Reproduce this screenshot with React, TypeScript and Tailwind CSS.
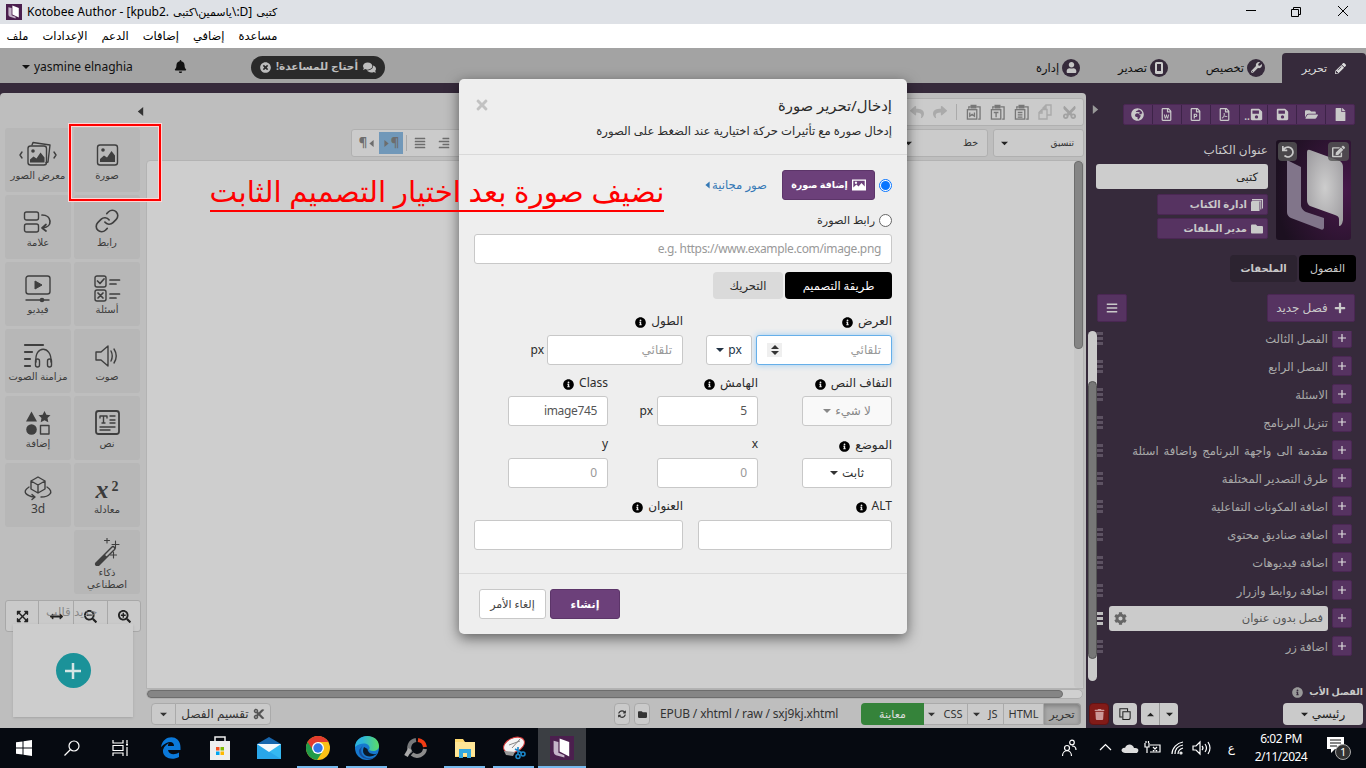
import React from "react";
import {
  FaPencilAlt, FaWrench, FaUser, FaBell, FaComments, FaTimesCircle, FaFile, FaFolderOpen, FaSave,
  FaGlobeAfrica, FaUndo, FaEdit, FaFolder, FaPlus, FaBars, FaInfoCircle, FaTrash, FaCog, FaCut, FaReply, FaShare,
  FaAlignJustify, FaAlignRight, FaSearchPlus, FaSearchMinus, FaExpandArrowsAlt, FaArrowsAltH, FaSyncAlt,
  FaTimes, FaRegFileWord, FaRegFilePdf, FaRegFilePowerpoint,
} from "react-icons/fa";
import { Link } from "lucide-react";

type Kids = { children?: React.ReactNode; className?: string };

function Ar({ children, className = "" }: Kids) {
  return <span dir="rtl" className={`whitespace-nowrap ${className}`}>{children}</span>;
}

function Lat({ children }: Kids) {
  return <span dir="ltr" className="tracking-[-0.35px] whitespace-nowrap">{children}</span>;
}

const triangles = { down: "M0 2.500H10L5 7.500Z", up: "M0 7.500H10L5 2.500Z", left: "M8 0V10L2 5Z", right: "M2 0V10L8 5Z" };

function Caret({ dir = "down", className = "h-2 w-2" }: { dir?: keyof typeof triangles; className?: string }) {
  return <svg viewBox="0 0 10 10" fill="currentColor" className={`shrink-0 ${className}`}><path d={triangles[dir]} /></svg>;
}

function Picture({ className = "" }: { className?: string }) {
  return (
    <svg viewBox="0 0 14 12" className={className}>
      <path fillRule="evenodd" fill="currentColor" d="M0 0.500H14V11.500H0ZM1.300 1.800V8.500L4.500 5.500L6.500 7.500L9.500 4L12.700 7.500V1.800ZM4 2.500A1.200 1.200 0 1 1 3.900 2.500Z" />
    </svg>
  );
}

function Pages({ className = "" }: { className?: string }) {
  return (
    <svg viewBox="0 0 14 14" className={className} fill="none" stroke="currentColor" strokeWidth="1.200">
      <path d="M1 4.500H9.500V13.500H3Q1 13.500 1 11.500Z" /><path d="M4 4V.8H13V10.500H10" />
    </svg>
  );
}

function Logo({ className = "" }: { className?: string }) {
  return (
    <svg viewBox="0 0 75 100" preserveAspectRatio="none" className={className}>
      <defs>
        <radialGradient id="cover" cx="0.9" cy="0.5" r="0.9">
          <stop offset="0" stopColor="#47194a" />
          <stop offset="1" stopColor="#1c1020" />
        </radialGradient>
        <radialGradient id="page" cx="0.5" cy="0.5" r="0.7">
          <stop offset="0" stopColor="#cdcdcd" />
          <stop offset="1" stopColor="#9b999d" />
        </radialGradient>
      </defs>
      <rect width="75" height="100" rx="3" fill="url(#cover)" />
      <path d="M11 20 L25 27 V66 Q26 70 30 72 L48 78 V88 Q47 91 44 89 L15 78 Q11 76 11 72Z" fill="#81758a" />
      <path d="M31 12 Q31 9 34 10 L64 21 Q67 23 67 27 V80 Q66 86 63 86 V79 Q63 76 59 75 L34 66 Q31 64 31 60Z" fill="url(#page)" />
    </svg>
  );
}

function MiniLogo({ className = "" }: { className?: string }) {
  return (
    <svg viewBox="0 0 20 20" className={className}>
      <rect width="20" height="20" fill="#4b1f4e" />
      <path d="M3 4 L7 5 V14 L12 16 V18 L5 16 Q3 15 3 13Z" fill="#c5b3c9" />
      <path d="M8 2 L16 5 V17 L8 13Z" fill="#fff" />
    </svg>
  );
}

function TitleBar() {
  return (
    <div className="flex h-6 shrink-0 items-center bg-[#dee1e6] pl-1.5 text-[12px] text-black">
      <MiniLogo className="h-4 w-4" />
      <span className="ml-[5px] whitespace-nowrap text-[12px]">Kotobee Author - [kpub2. </span>
      <Ar className="ml-1 text-[11px]">ياسمين\كتبى</Ar>
      <span>\:D] </span>
      <Ar className="ml-1 text-[11px]">كتبى</Ar>
      <svg viewBox="0 0 110 20" className="mr-[16px] ml-auto h-5 w-[110px]" fill="none" stroke="#000">
        <path d="M6 8.500H16 M51.500 7.500H58.500V14.500H51.500Z M53.500 7V5.500H60.500V12.500H59 M98 4L108 14M108 4L98 14" />
      </svg>
    </div>
  );
}

function MenuBar() {
  return (
    <div className="flex h-6 shrink-0 items-center gap-[14px] bg-white pl-[6.500px] text-[11.5px] text-black">
      <Ar>ملف</Ar><Ar>الإعدادات</Ar><Ar>الدعم</Ar><Ar>إضافات</Ar><Ar>إضافي</Ar><Ar>مساعدة</Ar>
    </div>
  );
}

function TopTab({ icon, children, className = "" }: Kids & { icon: React.ReactNode }) {
  return (
    <div className={`flex items-center gap-[3px] ${className}`}>
      <Ar>{children}</Ar>
      <span className="flex h-[18px] w-[18px] items-center justify-center rounded-full bg-[#362a3b] text-[11px] text-[#c5c5c5]">{icon}</span>
    </div>
  );
}

function AppHeader() {
  return (
    <div className="flex h-[35px] shrink-0 items-center bg-[#a3a3a3] text-[11.5px] text-[#111]">
      <Caret className="mt-0.5 ml-[22px] h-2 w-2" />
      <span className="mt-[3px] ml-1 w-[140px] text-[12px]">yasmine elnaghia</span>
      <FaBell className="mt-px text-[13px]" />
      <div className="mt-[3px] ml-[64px] flex h-[23px] w-[134px] items-center justify-center gap-[5px] rounded-full bg-[#2a2a2a] text-[#bdbdbd]">
        <FaTimesCircle className="text-[11px]" />
        <Ar className="text-[10.5px] font-bold">أحتاج للمساعدة!</Ar>
        <FaComments className="text-[13px]" />
      </div>
      <div className="ml-auto flex h-full items-center pt-1">
        <TopTab className="mr-[38px]" icon={<FaUser />}>إدارة</TopTab>
        <TopTab className="mr-[38px]" icon={<svg viewBox="0 0 10 12" className="h-3"><rect x="1" width="8" height="12" rx="1.5" fill="#ccc" /><rect x="3" y="2" width="4" height="7" fill="#362a3b" /></svg>}>تصدير</TopTab>
        <TopTab className="mr-[17px]" icon={<FaWrench />}>تخصيص</TopTab>
      </div>
      <div className="mt-[5px] flex h-[30px] w-[84px] items-center justify-center gap-2 rounded-t bg-[#362a3b] text-[11px] text-[#ddd]">
        <Ar>تحرير</Ar>
        <FaPencilAlt className="text-[11px]" />
      </div>
    </div>
  );
}

const stroke = { fill: "none", stroke: "#3f3f3f", strokeWidth: 1.4, strokeLinecap: "round", strokeLinejoin: "round" } as const;

const icons: Record<string, React.ReactNode> = {
  image: <g><rect x="4.5" y="4" width="20" height="20" rx="2.5" {...stroke} /><circle cx="10" cy="9" r="1.8" fill="#3f3f3f" /><path d="M7 21v-3l4-3.500 3 2 4.500-6.500 3.500 4.500v6.500Z" fill="#3f3f3f" /></g>,
  gallery: <g><path d="M8 4l1-2.5 17 2.5-2 17-2 .5" {...stroke} /><rect x="4" y="5" width="18.500" height="19" rx="2.500" {...stroke} /><circle cx="9" cy="10" r="1.800" fill="#3f3f3f" /><path d="M6 21.500v-3l3.500-3 3 2 4-6 4 5v5Z" fill="#3f3f3f" /><path d="M-2 11l-2 3 2 3M30 11l2 3-2 3" {...stroke} /></g>,
  link: <Link width="26" height="26" x="1" y="0" color="#3f3f3f" strokeWidth={1.5} />,
  tag: <g><rect x=".5" y="4" width="14" height="8" rx="2" {...stroke} /><rect x=".5" y="16" width="14" height="8" rx="2" {...stroke} /><path d="M18 7c10 0 11 12 1 13m3-3.500l-4 3.500 4 3" {...stroke} strokeWidth="1.700" /></g>,
  quiz: <g><rect x="2" y="1" width="11" height="11" rx="2" {...stroke} /><rect x="2" y="15" width="11" height="11" rx="2" {...stroke} /><path d="M4.500 6l2.500 2.500L11 4M5 18l5 5m0-5l-5 5M17 5h9.500M17 9h6M17 19h9.500M17 23h6" {...stroke} strokeWidth="1.700" /></g>,
  video: <g><rect x="2" y="1" width="24" height="18" rx="2.500" {...stroke} /><path d="M11 6l7 4-7 4Z" fill="#3f3f3f" stroke="#3f3f3f" /><path d="M2 25h23" {...stroke} /><circle cx="18" cy="25" r="2.300" fill="#3f3f3f" /></g>,
  sound: <g {...stroke}><path d="M3 10h5l7-6v20l-7-6H3Zm15-1q2.500 5 0 10m3-12q4.500 7 0 14" /></g>,
  sync: <g><path d="M1 3h18M1 10h7M1 17h5M1 24h5" {...stroke} strokeWidth="2.200" /><path d="M12 20c-2-17 16-17 15 0" {...stroke} /><rect x="11.500" y="17" width="4" height="8" rx="2" {...stroke} /><rect x="23.500" y="17" width="4" height="8" rx="2" {...stroke} /></g>,
  text: <g><rect x="3" y="2" width="23" height="23" rx="2.500" {...stroke} strokeWidth="1.800" /><path d="M7 9v-2h7v2M10.500 7v7M9 14h3M17 7h5M17 11h5M17 14h5M7 18h15M7 21h10" {...stroke} /></g>,
  shapes: <g fill="#3f3f3f"><path d="M7.500 2.500l5.500 10h-11Z M20.500 2l1.900 3.700 4.100.5-3 2.900.8 4.200-3.800-2-3.800 2 .8-4.200-3-2.900 4.100-.5Z" /><circle cx="7.500" cy="20.500" r="5.300" /><rect x="16.500" y="16.500" width="8.500" height="8.500" {...stroke} /></g>,
  cube: <g><path d="M14 1l7 4v8l-7 4-7-4V5Zm0 8l7-4m-7 4L7 5m7 4v8M5 11c-8 5-2 9 5 10M23 11c8 5 2 10-6 10M8 18.500l3 2.500-3 2.500" {...stroke} /></g>,
  wand: <g><path d="M4.500 26L20 10.500" stroke="#3f3f3f" strokeWidth="5" strokeLinecap="round" /><path d="M13.500 17L20 10.500" stroke="#b7b7b7" strokeWidth="2.200" strokeLinecap="round" /><path d="M14 0v5m-2.500-2.500h5M22.500 3v7m-3.500-3.500h7M20.500 14v6m-3-3h6" {...stroke} strokeWidth="1.100" /></g>,
};

const tools: [string, string][] = [
  ["gallery", "معرض الصور"], ["image", "صورة"], ["tag", "علامة"], ["link", "رابط"], ["video", "فيديو"], ["quiz", "أسئلة"],
  ["sync", "مزامنة الصوت"], ["sound", "صوت"], ["shapes", "إضافة"], ["text", "نص"], ["cube", "3d"], ["math", "معادلة"],
];

function Tool({ icon, label }: { icon: string; label: string }) {
  return (
    <div className="flex h-16 w-[66px] flex-col items-center rounded-[3px] bg-[#b7b7b7] pt-[13px] text-[10px] leading-[13px] text-[#3b3b3b]">
      {icon === "math"
        ? <div className="flex h-7 gap-[3px] font-['Liberation_Serif'] leading-none"><i className="pt-[3px] text-[26px] leading-[22px] font-bold">x</i><b className="pt-1 text-[14px]">2</b></div>
        : <svg viewBox="0 0 28 28" className="h-7 w-7 shrink-0 overflow-visible">{icons[icon]}</svg>}
      <Ar className={label === "3d" ? "-mt-0.5 text-[12px]" : label === "معادلة" ? "-mt-px" : ""}>{label}</Ar>
    </div>
  );
}

function ToolPanel() {
  return (
    <div className="flex w-[146px] shrink-0 flex-col pl-[5px]">
      <Caret dir="left" className="mt-[14px] mr-px h-[9px] w-[9px] self-end text-[#333]" />
      <div className="mt-3 grid w-[135px] grid-cols-2 gap-[3px]">
        {tools.map(([icon, label]) => <Tool key={label} icon={icon} label={label} />)}
        <div className="col-start-2 flex h-16 w-[66px] flex-col items-center rounded-[3px] bg-[#b7b7b7] pt-[8px] text-[10px] leading-[12px] text-[#3b3b3b]">
          <svg viewBox="0 0 28 28" className="h-7 w-7 shrink-0">{icons.wand}</svg>
          <Ar>ذكاء</Ar><Ar>اصطناعي</Ar>
        </div>
      </div>
      <div className="relative mt-[6px] h-8 w-[136px] shrink-0">
        <div className="flex h-full divide-x divide-[#a8a8a8] rounded-[3px] border border-[#a8a8a8] bg-[#cacaca] text-[13px] text-[#222]">
          <span className="flex w-[33px] items-center justify-center"><FaExpandArrowsAlt /></span>
          <span className="flex w-[35px] items-center justify-center"><FaArrowsAltH /></span>
          <span className="flex w-[34px] items-center justify-center"><FaSearchMinus /></span>
          <span className="flex flex-1 items-center justify-center"><FaSearchPlus /></span>
        </div>
        <Ar className="absolute top-[3px] left-[41px] text-[12px] leading-[18px] text-[#777]/80">جديد قالب</Ar>
      </div>
      <div className="relative mt-[-8px] ml-2 flex h-[93px] w-[120px] shrink-0 items-center justify-center bg-[#cdcdcd] shadow">
        <span className="flex h-[35px] w-[35px] items-center justify-center rounded-full bg-[#1b9299]">
          <svg viewBox="0 0 16 16" className="h-4 w-4"><path d="M8 0V16M0 8H16" stroke="#d5e5e5" strokeWidth="2.500" /></svg>
        </span>
      </div>
    </div>
  );
}

function Clip({ letter }: { letter?: string }) {
  return (
    <svg viewBox="0 0 16 18" className="h-[17px] w-[15px]" fill="none" stroke="#777" strokeWidth="1.400">
      <path d="M3 5V3H5M11 3h4v13h-2" /><path d="M5.500 1.500h5v2.500h-5Z" fill="#777" /><rect x="1.500" y="6" width="10" height="10" />
      {letter === "T" && <path d="M4 9h5M6.500 9v5" />}
      {letter === "W" && <path d="M4 9v4l2.500-2L9 13V9" />}
      {!letter && <path d="M4 9h5M4 11.500h5M4 14h5" />}
    </svg>
  );
}

function EditorToolbar() {
  const box = "flex h-7 items-center rounded-[3px] border border-[#b0b0b0] bg-[#cbcbcb] text-[#6d6d6d]";
  return (
    <div className="flex flex-col gap-[3px] pt-[5px] pr-[2px]">
      <div className={`${box} ml-[500px] justify-end gap-[9px] pr-[6px] text-[14px]`}>
        <FaReply className="text-[#aaa]" /><FaShare className="text-[#aaa]" />
        <span className="h-4 w-px bg-[#aaa]" />
        <Clip letter="W" /><Clip letter="T" /><Clip />
        <svg viewBox="0 0 14 16" className="h-4 w-[14px]" fill="none" stroke="#aaa" strokeWidth="1.400"><path d="M5 5V4l3-3h5v10H9.500M1 8.500L4 5.500h5V15H1ZM4 6v3H1M8 1v3H5" /></svg>
        <FaCut className="ml-px rotate-[-90deg] text-[15px] text-[#a2a2a2]" />
      </div>
      <div className="flex justify-end gap-[5px]">
        <div className={`${box} w-[637px] pl-[3px] text-[12px]`}>
          <span className="flex w-6 items-center justify-center gap-px text-[13px] font-bold">¶<Caret dir="left" className="h-[7px] w-[7px]" /></span>
          <span className="flex h-[22px] w-6 items-center justify-center gap-px bg-[#7198b9] text-[13px] font-bold"><Caret dir="right" className="h-[7px] w-[7px]" />¶</span>
          <span className="mx-[3px] h-4 w-px bg-[#aaa]" />
          <FaAlignJustify className="ml-1" /><FaAlignRight className="ml-3" />
          <Caret className="ml-auto h-[7px] w-[7px] text-[#222]" />
          <Ar className="mr-[9px] ml-[51px] text-[9.500px] text-[#333]">خط</Ar>
        </div>
        <div className={`${box} w-[91px] justify-between pr-[9px] pl-[7px]`}>
          <Caret className="h-[7px] w-[7px] text-[#222]" />
          <Ar className="text-[9px] text-[#333]">تنسيق</Ar>
        </div>
      </div>
    </div>
  );
}

function StatusBar() {
  const b = "flex h-[22px] items-center justify-center border border-[#aaa] bg-[#cacaca]";
  return (
    <div className="mt-1 flex items-center pl-[5px] text-[11px] text-[#333]">
      <span className={`${b} w-[25px] rounded-l-sm`}><Caret className="h-[7px] w-[7px]" /></span>
      <span className={`${b} -ml-px w-[96px] gap-1 rounded-r-sm text-[12px]`}><Ar>تقسيم الفصل</Ar><FaCut className="text-[12px] text-[#555]" /></span>
      <span className={`${b} ml-auto h-[17px] w-4 rounded-sm`}><FaSyncAlt className="text-[8px]" /></span>
      <span className={`${b} ml-1 h-[17px] w-4 rounded-sm`}><FaFolder className="text-[9px]" /></span>
      <span className="ml-[10px] w-[201px] text-[12px] tracking-[-0.15px] whitespace-nowrap">EPUB / xhtml / raw / sxj9kj.xhtml</span>
      <span className="flex h-[22px] w-[63px] items-center justify-center rounded-l-sm bg-[#35833a] text-[#ddd]"><Ar>معاينة</Ar></span>
      <span className={`${b} w-11 gap-2 border-l-0`}><Caret className="h-[7px] w-[7px]" />CSS</span>
      <span className={`${b} w-9 gap-2 border-l-0`}><Caret className="h-[7px] w-[7px]" />JS</span>
      <span className={`${b} w-10 border-l-0`}>HTML</span>
      <span className="mr-[5px] flex h-[22px] w-[37px] items-center justify-center rounded-r-sm border border-l-0 border-[#999] bg-[#a8a8a8] shadow-[inset_0_2px_4px_rgba(0,0,0,.25)]"><Ar>تحرير</Ar></span>
    </div>
  );
}

function Editor() {
  return (
    <div className="flex w-[1086px] shrink-0 rounded-t bg-[#bebebe]">
      <ToolPanel />
      <div className="flex flex-1 flex-col">
        <EditorToolbar />
        <div className="mt-[3px] mr-[2px] flex h-[529px] justify-end rounded-t border border-[#b3b3b3] bg-[#cecece]">
          <div className="w-[9px] rounded bg-[#c7c7c7]"><div className="h-[188px] rounded border border-[#6d6d6d] bg-[#858585]" /></div>
        </div>
        <div className="mr-[3px] h-[10px] rounded-full border border-[#b0b0b0] bg-[#d0d0d0]"><div className="h-full w-[916px] rounded-full border border-[#6d6d6d] bg-[#858585]" /></div>
        <StatusBar />
      </div>
    </div>
  );
}

const chapters = ["الفصل الثالث", "الفصل الرابع", "الاسئلة", "تنزيل البرنامج", "مقدمة الى واجهة البرنامج واضافة اسئلة", "طرق التصدير المختلفة", "اضافة المكونات التفاعلية", "اضافة صناديق محتوى", "اضافة فيديوهات", "اضافة روابط وازرار", "فصل بدون عنوان", "اضافة زر"];

const fileActions = [
  <FaGlobeAfrica />, <FaRegFileWord />, <FaRegFilePowerpoint />, <FaRegFilePdf />,
  <><span className="mt-1 text-[10px] font-bold">..</span><FaSave /></>, <FaSave />, <FaFolderOpen />, <FaFile />,
];

function Sidebar() {
  const purple = "bg-[#563361] border border-[#4a2753]";
  return (
    <div className="flex flex-1 flex-col text-[11.5px] text-[#c9c9c9]">
      <div className="mt-5 flex h-[22px] shrink-0 items-center pr-[11px] pl-[5px]">
        <Caret dir="right" className="mt-[-10px] h-[9px] w-[9px] text-[#999]" />
        <div className={`ml-auto flex h-[21px] w-[232px] divide-x divide-[#3d2348] rounded-xs text-[13px] ${purple}`}>
          {fileActions.map((icon, i) => (
            <span key={i} className="flex flex-1 items-center justify-center">{icon}</span>
          ))}
        </div>
      </div>
      <div className="mt-[15px] flex h-[100px] shrink-0 justify-end gap-2 pr-[15px]">
        <div className="flex flex-col items-end">
          <Ar className="text-[12px] leading-[20px]">عنوان الكتاب</Ar>
          <div className="mt-1 flex h-[25px] w-[172px] items-center rounded-[3px] bg-[#cdcdcd] px-[10px] text-[#222]" dir="rtl">كتبى</div>
          <div className={`mt-[5px] flex h-[21px] w-[111px] items-center justify-end gap-1 rounded-xs pr-1 text-[10px] font-bold ${purple}`}><Ar>ادارة الكتاب</Ar><svg viewBox="0 0 12 12" className="h-3 w-3" fill="currentColor"><path d="M0 2.500h8.500V12H0ZM1 0h11v9.500h-1V1.200H1ZM1 1.800h9.300V10.500h-1v-8H1Z" /></svg></div>
          <div className={`mt-[3px] flex h-[21px] w-[111px] items-center justify-end gap-1 rounded-xs pr-1 text-[10px] font-bold ${purple}`}><Ar>مدير الملفات</Ar><FaFolder className="text-[12px]" /></div>
        </div>
        <div className="relative h-[100px] w-[75px]">
          <Logo className="h-full w-full" />
          <span className="absolute top-[2px] left-[2px] flex h-[19px] w-[19px] items-center justify-center rounded-sm bg-[#555]/80 text-[12px]"><FaUndo /></span>
          <span className="absolute top-[2px] right-[2px] flex h-[19px] w-[21px] items-center justify-center rounded-sm bg-[#555]/80 text-[13px]"><FaEdit /></span>
        </div>
      </div>
      <div className="mt-[15px] flex shrink-0 justify-end gap-[2px] pr-[10px]">
        <span className="flex h-[27px] w-[67px] items-center justify-center rounded bg-[#2c2330] text-[10px] font-bold"><Ar>الملحقات</Ar></span>
        <span className="flex h-[27px] w-[57px] items-center justify-center rounded bg-black text-[11px]"><Ar>الفصول</Ar></span>
      </div>
      <div className="mt-3 flex shrink-0 justify-between px-[11px]">
        <span className={`flex h-7 w-[30px] items-center justify-center rounded-xs text-[12px] ${purple}`}><FaBars /></span>
        <span className={`flex h-7 w-[88px] items-center justify-center gap-1.5 rounded-xs text-[12px] ${purple}`}><Ar>فصل جديد</Ar><FaPlus /></span>
      </div>
      <div className="mt-[9px] flex h-[350px] shrink-0 overflow-hidden pl-[2px]">
        <div className="h-full w-[9px] rounded-full bg-[#cacaca] pt-[50px]"><div className="h-[278px] rounded-full border border-[#555] bg-[#777]" /></div>
        <div className="-mt-[3px] flex-1 pr-[14px]">
          {chapters.map((c, i) => (
            <div key={c} className="mb-2 flex h-5 items-center leading-[14px]">
              <span className={`flex w-[6px] flex-col gap-[2px] ${i === 10 ? "text-[#bdbdbd]" : "text-[#5d5262]"}`}>
                <i className="h-[3px] bg-current" /><i className="h-[3px] bg-current" /><i className="h-[3px] bg-current" />
              </span>
              {i === 10
                ? <span className="mr-1 ml-auto flex h-[25px] w-[219px] items-center justify-between rounded-[3px] bg-[#cbcbcb] px-[5px] text-[#555]"><FaCog className="text-[13px] text-[#666]" /><Ar>{c}</Ar></span>
                : <Ar className={`mr-1 ml-auto pt-px text-[#aaa] ${i === 4 ? "[word-spacing:2px]" : ""}`}>{c}</Ar>}
              <span className={`flex h-5 w-5 items-center justify-center rounded-xs ${purple}`}>
                <svg viewBox="0 0 8 8" className="h-2 w-2"><path d="M4 0V8M0 4H8" stroke="#ddd" strokeWidth="1.200" /></svg>
              </span>
            </div>
          ))}
        </div>
      </div>
      <div className="mt-[2px] flex h-[18px] shrink-0 items-center justify-end gap-[6px] pr-[3px] text-[9.500px] font-bold"><FaInfoCircle className="text-[11px] text-[#999]" /><Ar>الفصل الأب</Ar></div>
      <div className="mt-[2px] flex h-[22px] shrink-0 px-[3px] text-[#222]">
        <span className="flex w-5 items-center justify-center rounded-sm border border-[#641313] bg-[#821b18] text-[11px] text-[#c99]"><FaTrash /></span>
        <span className="ml-1 flex w-6 items-center justify-center rounded-sm bg-[#cacaca] text-[12px]"><Pages className="h-3 w-3 scale-x-[-1]" /></span>
        <span className="ml-1 flex w-[37px] divide-x divide-[#999] rounded-sm bg-[#cacaca]"><span className="flex flex-1 items-center justify-center"><Caret dir="up" className="h-[7px] w-[7px]" /></span><span className="flex flex-1 items-center justify-center"><Caret className="h-[7px] w-[7px]" /></span></span>
        <span className="ml-auto flex w-20 items-center justify-center gap-[4px] rounded-sm bg-[#cacaca] text-[12px]"><Caret className="h-[7px] w-[7px]" /><Ar>رئيسي</Ar></span>
      </div>
    </div>
  );
}

function Label({ children }: Kids) {
  return <div className="flex h-5 items-center gap-[5px] text-[12px] leading-5"><span>{children}</span><FaInfoCircle className="mt-[3px] text-[11px] text-black" /></div>;
}

function Field({ children, className = "px-[10px] text-[#999]", focused = false }: Kids & { focused?: boolean }) {
  return <div className={`flex h-[30px] items-center rounded-[3px] border text-[12px] ${focused ? "border-[#66afe9] shadow-[0_0_6px_#9ccdf5]" : "border-[#c8c8c8]"} ${className}`}>{children}</div>;
}

function Modal() {
  return (
    <div dir="rtl" className="absolute top-[79px] left-[459px] flex h-[555px] w-[448px] flex-col rounded-[5px] bg-[#eee] text-[12px] text-[#2b2b2b] shadow-[0_4px_14px_rgba(0,0,0,.55)]">
      <div className="h-[76px] border-b border-[#d9d9d9] px-[15px] pt-4">
        <div className="flex justify-between"><span className="text-[14.850px] leading-[20px]">إدخال/تحرير صورة</span><FaTimes className="mt-[2px] mr-auto text-[16px] text-[#c2c2c2]" /></div>
        <div className="mt-[7px] text-[11.650px] leading-[18px] whitespace-nowrap">إدخال صورة مع تأثيرات حركة اختيارية عند الضغط على الصورة</div>
      </div>
      <div className="h-[419px] border-b border-[#dadada] px-[15px] pt-[15px]">
        <div className="flex h-[30px] items-center">
          <span className="flex h-[13px] w-[13px] items-center justify-center rounded-full border border-[#0875ff] bg-white"><i className="h-[9px] w-[9px] shrink-0 rounded-full bg-[#0875ff]" /></span>
          <span className="mr-1 flex h-[30px] w-[93px] items-center justify-center gap-1 rounded-[3px] border border-[#5c3569] bg-[#6c407a] text-[9.500px] font-bold text-white"><Picture className="h-3 w-[14px]" />إضافة صورة</span>
          <span className="mr-[15px] flex items-center gap-px whitespace-nowrap text-[11.700px] text-[#3478b5]">صور مجانية<Caret dir="left" className="h-[8px] w-[7px]" /></span>
        </div>
        <div className="mt-[10px] flex h-5 items-center"><span className="h-[13px] w-[13px] rounded-full border border-[#666] bg-white" /><span className="mr-1 text-[11.100px]">رابط الصورة</span></div>
        <Field className="mt-1 bg-white px-[10px] text-[#999]"><Lat>e.g. https://www.example.com/image.png</Lat></Field>
        <div className="mt-2 flex gap-[2px]">
          <span className="flex h-[27px] w-[107px] items-center justify-center rounded bg-black text-[11.500px] text-white">طريقة التصميم</span>
          <span className="flex h-[27px] w-[70px] items-center justify-center rounded bg-[#dadada] text-[11.500px]">التحريك</span>
        </div>
        <div className="mt-3 flex">
          <div className="w-[209px]"><Label>العرض</Label>
            <div className="mt-1 flex gap-1">
              <Field focused className="w-[136px] justify-between bg-white px-[10px] text-[#999]">تلقائي<span className="flex h-[14px] w-[15px] flex-col items-center justify-center bg-[#efefef] text-[#333]"><Caret dir="up" className="-mb-0.5 h-2 w-2" /><Caret className="h-2 w-2" /></span></Field>
              <Field className="w-[46px] justify-center gap-1 bg-white text-[#234]">px<Caret className="h-2 w-2" /></Field>
            </div>
          </div>
          <div><Label>الطول</Label><div className="mt-1 flex items-center gap-[3px]"><Field className="w-[136px] bg-white px-[10px] text-[#999]">تلقائي</Field>px</div></div>
        </div>
        <div className="mt-[8px] flex">
          <div className="w-[134px]"><Label>التفاف النص</Label><Field className="mt-[3px] w-[90px] justify-center gap-1 bg-[#f9f9f9] text-[#888]">لا شيء<Caret className="h-2 w-2" /></Field></div>
          <div className="w-[150px]"><Label>الهامش</Label><div className="mt-[3px] flex items-center gap-1"><Field className="w-[101px] bg-white px-[10px] text-[#555]">5</Field>px</div></div>
          <div><Label>Class</Label><Field className="mt-[3px] w-[100px] bg-white px-[10px] text-[#555]"><Lat>image745</Lat></Field></div>
        </div>
        <div className="mt-[9px] flex">
          <div className="w-[134px]"><Label>الموضع</Label><Field className="mt-[3px] w-[90px] justify-center gap-1 bg-white text-[#333]">ثابت<Caret className="h-2 w-2" /></Field></div>
          <div className="w-[150px]"><div className="h-5">x</div><Field className="mt-[3px] w-[101px] bg-white px-[10px] text-[#999]">0</Field></div>
          <div><div className="h-5">y</div><Field className="mt-[3px] w-[100px] bg-white px-[10px] text-[#999]">0</Field></div>
        </div>
        <div className="mt-[8px] flex gap-[15px]">
          <div className="w-[194px]"><Label>ALT</Label><Field className="mt-1 bg-white" /></div>
          <div className="w-[209px]"><Label>العنوان</Label><Field className="mt-1 bg-white" /></div>
        </div>
      </div>
      <div dir="ltr" className="flex gap-1 pt-[15px] pl-5">
        <Field className="w-[67px] justify-center bg-white text-[#444]"><Ar className="text-[11px]">إلغاء الأمر</Ar></Field>
        <span className="flex h-[30px] w-[70px] items-center justify-center rounded-[3px] border border-[#5c3569] bg-[#6c407a] text-[11px] font-bold text-white"><Ar>إنشاء</Ar></span>
      </div>
    </div>
  );
}

const taskIcons: React.ReactNode[] = [
  <svg viewBox="0 0 16 16" className="h-4 w-4" fill="#fff"><path d="M0 2.300l6.500-.9v6.100H0ZM7.500 1.200L16 0v7.500H7.500ZM0 8.500h6.500v6.100L0 13.700ZM7.500 8.500H16V16l-8.500-1.200Z" /></svg>,
  <svg viewBox="0 0 16 16" className="h-4 w-4" fill="none" stroke="#fff" strokeWidth="1.200"><circle cx="10" cy="6" r="5" /><path d="M6.500 9.500L.5 15.500" /></svg>,
  <svg viewBox="0 0 18 16" className="ml-0.5 h-4 w-[18px]" fill="none" stroke="#fff" strokeWidth="1.200"><path d="M1 0v3h10V0M1 16v-3h10v3M1 5.500h10v5H1ZM15 0v3M15 7v9" /><path d="M14 4.500h2" strokeWidth="2" /></svg>,
  <svg viewBox="0 0 20 22" className="h-[22px] w-5"><path d="M0 10C2-3 20-3 19.500 11V13H7c1 5 7 5 11 2.500V20C11 24 1 21 2 13 3 9 6 7 8 6 7 7 7 8 7 9h6C13 4 7 3 0 10Z" fill="#0b79da" /></svg>,
  <svg viewBox="0 0 20 24" className="h-6 w-5"><path d="M5 6V1h10v5" fill="none" stroke="#eee" strokeWidth="1.500" /><path d="M0 5h20v19H0Z" fill="#eee" /><path d="M6 11h3.500v3.500H6Z" fill="#f25022" /><path d="M10.500 11H14v3.500h-3.500Z" fill="#7fba00" /><path d="M6 15.500h3.500V19H6Z" fill="#00a4ef" /><path d="M10.500 15.500H14V19h-3.500Z" fill="#ffb900" /></svg>,
  <svg viewBox="0 0 24 22" className="h-[22px] w-6"><path d="M0 7L12 0l12 7v15H0Z" fill="#1766ad" /><path d="M0 7h24v15H0Z" fill="#35b8f1" /><path d="M0 7v15h24Z" fill="#29a6e9" /><path d="M0 7h24L12 15Z" fill="#f5f8fb" /></svg>,
  <svg viewBox="0 0 24 24" className="h-6 w-6"><circle cx="12" cy="12" r="12" fill="#fbc116" /><path d="M12 12L1.600 6A12 12 0 0 0 11 24L17 15Z" fill="#229b4a" /><path d="M12 6h10.400A12 12 0 0 0 1.600 6L7 14" fill="#e33b2e" /><circle cx="12" cy="12" r="6" fill="#fff" /><circle cx="12" cy="12" r="4.700" fill="#3276e8" /></svg>,
  <svg viewBox="0 0 24 24" className="h-6 w-6"><defs><linearGradient id="edge"><stop offset=".3" stopColor="#2cb5dc" /><stop offset="1" stopColor="#5bdc66" /></linearGradient></defs><circle cx="12" cy="12" r="12" fill="#1679cf" /><path d="M0 11C1-4 24-3 24 10c0 5-6 6-10 4 3-5-5-10-14-3Z" fill="url(#edge)" /><path d="M9 11c-4 8 5 13 13.500 6.500C19 19 13 18 12.500 13Z" fill="#0a1a2a" /><path d="M8 9c-6 9 4 16 12 12-6 5-17 1-16-7Z" fill="#174e99" /></svg>,
  <svg viewBox="0 0 24 24" className="h-6 w-6" fill="none" strokeWidth="4"><path d="M12 4A8 8 0 0 0 7 17" stroke="#77797b" /><path d="M14 4A8 8 0 0 1 21 11" stroke="#f23c14" /><path d="M21 13A8 8 0 0 1 8 18" stroke="#8c8c8c" /><path d="M6 13L2 20" stroke="#aaa" /></svg>,
  <svg viewBox="0 0 22 22" className="h-[22px] w-[22px]"><path d="M1 2h8l2 3h10v15H1Z" fill="#ffda70" /><path d="M1 5h20v14H1Z" fill="#ffe696" /><path d="M5 12h12v9h-4v-5H9v5H5Z" fill="#32a8e0" /></svg>,
  <svg viewBox="0 0 24 24" className="h-6 w-6"><ellipse cx="12" cy="9" rx="11" ry="7" transform="rotate(-25 12 9)" fill="#f5f5f5" stroke="#d63a3a" /><path d="M2 15l2 4 7 1 2-4Z" fill="#999" /><path d="M7 9l11-4M10 12l8-9" stroke="#888" /><g fill="none" stroke="#1b87c9" strokeWidth="1.600"><path d="M13 13l7 4M16 11v7" /><circle cx="21" cy="18" r="2" /><circle cx="16" cy="20.500" r="2" /></g></svg>,
  <MiniLogo className="h-6 w-6" />,
];

function Taskbar() {
  return (
    <div className="flex h-10 shrink-0 bg-[#060a11] text-white">
      {taskIcons.map((icon, i) => (
        <div key={i} className={`relative flex items-center justify-center ${i === 11 ? "w-12 bg-[#3b3e43]" : i < 3 ? "w-12" : i === 3 ? "ml-[3px] w-12" : "w-[49px]"}`}>
          {icon}
          {[6, 7, 9, 10, 11].includes(i) && <span className={`absolute bottom-0 h-[2px] bg-[#76b9ed] ${i === 11 ? "inset-x-0" : "inset-x-1"}`} />}
        </div>
      ))}
      <div className="ml-auto flex items-center">
        <svg viewBox="0 0 160 20" className="h-5 w-[160px]" fill="none" stroke="#fff" strokeWidth="1.200">
          <circle cx="7" cy="10" r="2.500" /><path d="M2.500 18c0-7 9-7 9 0" /><circle cx="12" cy="4.500" r="2.300" /><path d="M12 8c3 0 4 2 4 4M40 12l5.500-5.500 5.500 5.500" />
          <path d="M65 15c-6-1-3-6 0-5 2-5 8-4 9 0 6-1 5 5 2 5Z" fill="#ddd" stroke="none" />
          <path d="M90 7h10v7h-10M93 9l4 4m0-4l-4 4M85 5v4h4V5M87 9v6M86 3v2m2.500-2v2" />
          <path d="M112 16c0-6 5-11 11-12M115 16c0-5 3-8 8-9M118 16c0-3 2-5 5-6" /><circle cx="121" cy="15" r="1" />
          <path d="M133 8h3l4-4v12l-4-4h-3ZM142 8q2 2 0 4M145 6q3 4 0 8M148 4q4 6 0 12" />
        </svg>
        <Ar className="ml-[8px] text-[12px]">ع</Ar>
        <div className="ml-[15px] flex w-[62px] flex-col items-center text-[12px] leading-[18px] tracking-[-0.5px]"><span>6:02 PM</span><span>2/11/2024</span></div>
        <svg viewBox="0 0 26 26" className="mr-[14px] ml-[14px] h-[26px] w-[26px]"><path d="M1 2h17v12H9l-4 4v-4H1Z" fill="#fff" /><path d="M4 5h11M4 8h11M4 11h7" stroke="#111" /><circle cx="17" cy="17" r="7.500" fill="#333" stroke="#aaa" /><text x="14" y="21" fontSize="11" fill="#fff">1</text></svg>
      </div>
    </div>
  );
}

export default function App() {
  return (
    <div className="relative flex h-[768px] w-[1366px] flex-col overflow-hidden bg-[#362a3b] font-['Noto_Sans','DejaVu_Sans',sans-serif]">
      <TitleBar />
      <MenuBar />
      <AppHeader />
      <div className="flex h-[645px] shrink-0">
        <div className="flex pt-[10px]"><Editor /></div>
        <Sidebar />
      </div>
      <Taskbar />
      <Modal />
      <div className="pointer-events-none absolute top-[123px] left-[68px] h-[79px] w-[94px] border border-[#ffd5d5]"><div className="h-full w-full border-2 border-[#f00] outline -outline-offset-3 outline-[#ffd5d5]" /></div>
      <div dir="rtl" className="absolute top-[171px] left-[210px] flex h-[41px] w-[454px] justify-center border-b-2 border-[#f00] text-[29.400px] leading-[40px] whitespace-nowrap text-[#f00]">نضيف صورة بعد اختيار التصميم الثابت</div>
    </div>
  );
}
